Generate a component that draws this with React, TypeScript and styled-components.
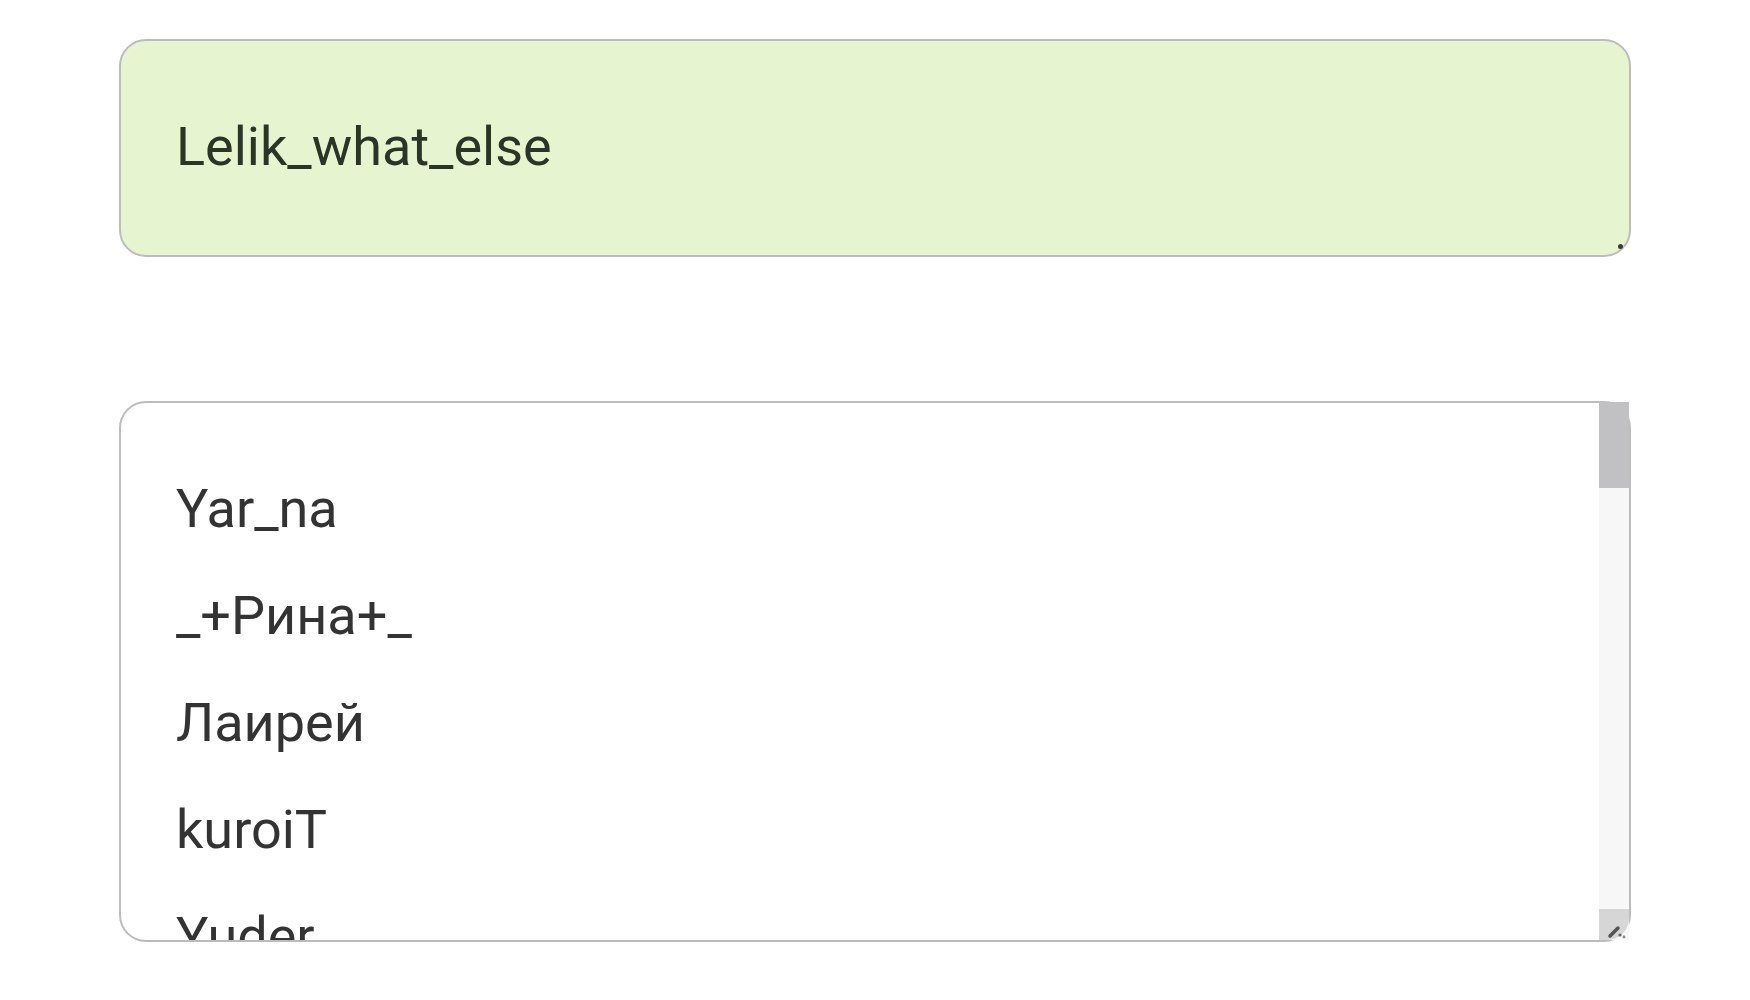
import { createGlobalStyle, styled } from "styled-components";

const GlobalStyle = createGlobalStyle`
  html, body {
    margin: 0;
    padding: 0;
    background: #ffffff;
  }
  body {
    font-family: Roboto, "Noto Sans", Arial, sans-serif;
  }
`;

const Page = styled.div`
  display: flex;
  flex-direction: column;
  gap: 144px;
  padding: 39px 0 0 119px;
  width: 1512px;
`;

const Field = styled.div<{ $tone: "green" | "white" }>`
  position: relative;
  box-sizing: border-box;
  border: 2px solid #bcbcbc;
  border-radius: 27px;
  background: ${({ $tone }) => ($tone === "green" ? "#e6f5d0" : "#ffffff")};
`;

const NameInput = styled(Field)`
  height: 218px;
  display: flex;
  align-items: center;
  padding: 0 0 4px 55px;
  font-size: 54px;
  color: #2b3526;
`;

const ResizeDot = styled.span`
  position: absolute;
  right: 6px;
  bottom: 6px;
  width: 5px;
  height: 5px;
  border-radius: 50%;
  background: #3a3a3a;
`;

const ListBox = styled(Field)`
  height: 541px;
  display: flex;
`;

const Items = styled.div`
  flex: 1;
  overflow: hidden;
  padding: 52px 0 0 55px;
  border-radius: 25px 0 0 25px;
`;

const Item = styled.div`
  font-size: 54px;
  line-height: 107px;
  color: #333333;
  white-space: nowrap;
`;

const ScrollTrack = styled.div`
  width: 30px;
  display: flex;
  flex-direction: column;
  background: #f7f7f7;
  margin-top: -1px;
`;

const Thumb = styled.div`
  height: 86px;
  background: #c1c1c3;
`;

const TrackSpace = styled.div`
  flex: 1;
`;

const Resizer = styled.div`
  height: 31px;
  background: #d6d6d6;
  display: flex;
  align-items: flex-end;
  justify-content: flex-end;
  border-bottom-right-radius: 22px;
`;

const names = ["Yar_na", "_+Рина+_", "Лаирей", "kuroiT", "Yuder", "Mira"];

const App = () => {
  return (
    <>
      <GlobalStyle />
      <Page>
        <NameInput $tone="green">
          Lelik_what_else
          <ResizeDot />
        </NameInput>
        <ListBox $tone="white">
          <Items>
            {names.map((name) => (
              <Item key={name}>{name}</Item>
            ))}
          </Items>
          <ScrollTrack>
            <Thumb />
            <TrackSpace />
            <Resizer>
              <svg width="22" height="18" viewBox="0 0 22 18">
                <path
                  d="M3 14 L11 6"
                  stroke="#555"
                  strokeWidth="3.5"
                  strokeLinecap="round"
                />
                <circle cx="13" cy="13" r="1.6" fill="#666" />
                <circle cx="17" cy="15" r="1.4" fill="#888" />
              </svg>
            </Resizer>
          </ScrollTrack>
        </ListBox>
      </Page>
    </>
  );
};

export default App;
